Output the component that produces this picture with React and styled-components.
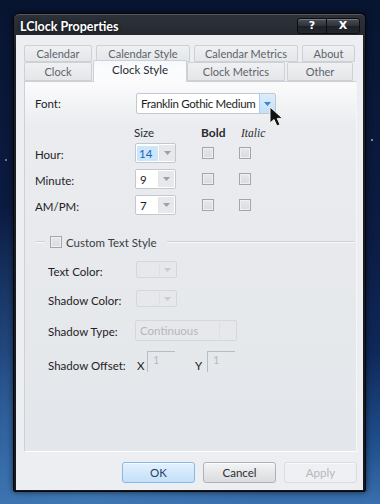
import React from "react";
import styled, { createGlobalStyle } from "styled-components";

const Global = createGlobalStyle`
  html, body { margin: 0; padding: 0; }
  body { font-family: Lato, "Noto Sans", sans-serif; }
  * { box-sizing: border-box; }
`;

const Desktop = styled.div`
  width: 380px;
  height: 504px;
  overflow: hidden;
  padding: 13px 14px 0 13px;
  background:
    radial-gradient(circle at 30px 20px, rgba(255,255,255,0.6) 0 1px, transparent 1.5px),
    radial-gradient(circle at 372px 140px, rgba(255,255,255,0.5) 0 1px, transparent 1.5px),
    radial-gradient(circle at 6px 160px, rgba(255,255,255,0.4) 0 1px, transparent 1.5px),
    radial-gradient(ellipse at 20% 100%, #3f77b3 0%, rgba(63,119,179,0) 45%),
    linear-gradient(180deg, #081531 0%, #0b1b42 45%, #0f285a 70%, #1f4f8c 88%, #3a70ad 100%);
`;

const Window = styled.div`
  width: 353px;
  height: 479px;
  display: flex;
  flex-direction: column;
  border-radius: 6px 6px 2px 2px;
  border: 1px solid #05070b;
  background: linear-gradient(180deg, #2e333b 0%, #1d2128 8%, #15181e 100%);
  box-shadow: inset 0 1px 0 rgba(255,255,255,0.18), 0 0 6px rgba(0,0,0,0.6);
  padding: 0 2px 2px 2px;
`;

const TitleBar = styled.div`
  height: 21px;
  flex: none;
  display: flex;
  align-items: center;
  justify-content: space-between;
  padding: 0 3px 0 4px;
`;

const Title = styled.div`
  color: #ffffff;
  font-weight: 700;
  font-size: 12.5px;
  text-shadow: 0 0 4px rgba(0,0,0,0.8);
  padding-top: 3px;
`;

const CaptionGroup = styled.div`
  display: flex;
  height: 16px;
  margin-top: 2px;
  border: 1px solid #0b0d10;
  border-radius: 3px;
  background: linear-gradient(180deg, #4a4f57 0%, #2d3138 50%, #1d2026 51%, #24282e 100%);
  box-shadow: inset 0 1px 0 rgba(255,255,255,0.25);
  overflow: hidden;
`;

const CaptionBtn = styled.div`
  width: ${p => p.$w}px;
  display: flex;
  align-items: center;
  justify-content: center;
  color: #ffffff;
  font-family: "DejaVu Sans", sans-serif;
  font-weight: 700;
  font-size: 11px;
  line-height: 1;
  border-left: ${p => (p.$first ? "none" : "1px solid #0c0e12")};
`;

const Client = styled.div`
  flex: 1;
  display: flex;
  flex-direction: column;
  background: #eceef2;
  padding: 10px 6px 7px 8px;
`;

const Tabs = styled.div`
  display: flex;
  flex-direction: column;
  position: relative;
  z-index: 1;
`;

const TabRow = styled.div`
  display: flex;
  height: ${p => p.$h}px;
  align-items: flex-end;
`;

const Tab = styled.div`
  width: ${p => p.$w}px;
  margin-left: ${p => p.$ml || 0}px;
  height: ${p => (p.$sel ? 22 : p.$h)}px;
  margin-bottom: ${p => (p.$sel ? -1 : 0)}px;
  display: flex;
  align-items: center;
  justify-content: center;
  white-space: nowrap;
  font-size: ${p => (p.$sel ? 11.5 : 11)}px;
  color: ${p => (p.$sel ? "#262a30" : "#5e636a")};
  border: 1px solid #cdd1d6;
  border-bottom: ${p => (p.$sel ? "none" : "1px solid #cdd1d6")};
  border-radius: 2px 2px 0 0;
  padding-bottom: ${p => (p.$sel ? 4 : 0)}px;
  background: ${p =>
    p.$sel
      ? "linear-gradient(180deg, #f4f8fc 0%, #fbfcfd 40%, #fbfbfc 100%)"
      : "linear-gradient(180deg, #eef0f2 0%, #e4e6e9 100%)"};
`;

const Panel = styled.div`
  height: 371px;
  flex: none;
  position: relative;
  background: linear-gradient(180deg, #fbfbfc 0%, #eaecef 12%, #e3e6ea 100%);
  border: 1px solid #cdd1d6;
  border-bottom-color: #ffffff;
  border-right-color: #f4f5f7;
  padding: 11px 0 0 10px;
  display: flex;
  flex-direction: column;
  color: #1f2226;
  font-size: 11.5px;
  white-space: nowrap;
`;

const FontRow = styled.div`
  display: flex;
  align-items: center;
  height: 21px;
`;

const Label = styled.div`
  width: ${p => p.$w}px;
  flex: none;
  padding-top: ${p => p.$pt || 0}px;
  color: ${p => p.$c || "#1f2226"};
`;

const Combo = styled.div`
  width: ${p => p.$w}px;
  height: ${p => p.$h}px;
  display: flex;
  align-items: stretch;
  background: ${p => (p.$disabled ? "#e6e8eb" : "#ffffff")};
  border: 1px solid ${p => (p.$disabled ? "#d4d7db" : "#c3c8cf")};
  border-radius: 2px;
  position: relative;
`;

const ComboText = styled.div`
  flex: 1;
  display: flex;
  align-items: center;
  padding-left: ${p => (p.$pl != null ? p.$pl : 4)}px;
  font-size: 11.5px;
  letter-spacing: ${p => p.$ls || 0}px;
  color: ${p => (p.$disabled ? "#b3b7bd" : "#1a1d21")};
`;

const Selected = styled.span`
  display: flex;
  align-items: center;
  width: 21px;
  height: 15px;
  margin-left: 1px;
  padding-left: 2px;
  background: #cce6fb;
  color: #1d64b4;
`;

const DropBtn = styled.div`
  width: 16px;
  flex: none;
  display: flex;
  align-items: center;
  justify-content: center;
  background: ${p =>
    p.$hot
      ? "linear-gradient(180deg, #dcedfc 0%, #c3e0f9 100%)"
      : p.$disabled
      ? "transparent"
      : "#e6e8eb"};
  border-left: 1px solid ${p => (p.$hot ? "#a9cdf0" : p.$disabled ? "#dcdfe3" : "#e2e4e7")};
  margin: ${p => (p.$hot ? "0" : "1px")};
`;

const Arrow = ({ color }) => (
  <svg width="7" height="4" viewBox="0 0 7 4">
    <path d="M0 0 H7 L3.5 4 Z" fill={color} />
  </svg>
);

const Grid = styled.div`
  display: grid;
  grid-template-columns: 100px 66px 38px 38px;
  grid-template-rows: 12px 20px 20px 20px;
  row-gap: 6px;
  align-items: center;
  margin-top: 11px;
`;

const HeaderCell = styled.div`
  align-self: end;
  line-height: 14px;
  font-size: ${p => (p.$bold ? 12 : 11.5)}px;
  font-weight: ${p => (p.$bold ? 700 : 400)};
  font-style: ${p => (p.$italic ? "italic" : "normal")};
  font-family: ${p => (p.$italic ? '"Liberation Serif", serif' : "inherit")};
  color: #2a2d31;
  margin-left: ${p => p.$ml || 0}px;
  margin-bottom: -3px;
`;

const Check = styled.div`
  width: 12px;
  height: 12px;
  margin-left: ${p => p.$ml || 0}px;
  border: 1px solid #a1a6ad;
  background: linear-gradient(180deg, #e6e8eb 0%, #d8dbdf 100%);
  box-shadow: inset 0 0 0 1px #eef0f2;
`;

const GroupHead = styled.div`
  display: flex;
  align-items: center;
  margin-top: 21px;
  height: 12px;
  margin-right: 2px;
`;

const Line = styled.div`
  height: 2px;
  border-top: 1px solid #cdd1d6;
  border-bottom: 1px solid #f7f8f9;
  width: ${p => (p.$w ? `${p.$w}px` : "auto")};
  flex: ${p => (p.$w ? "none" : 1)};
  margin-left: ${p => p.$ml || 0}px;
`;

const GroupTitle = styled.div`
  margin-left: 4px;
  color: #3a3e44;
  font-size: 11.5px;
`;

const GroupBody = styled.div`
  display: flex;
  flex-direction: column;
  padding-left: 13px;
  margin-top: 13px;
`;

const GRow = styled.div`
  display: flex;
  align-items: center;
  height: ${p => p.$h}px;
  margin-top: ${p => p.$mt || 0}px;
`;

const Sunken = styled.div`
  width: 28px;
  height: 21px;
  border-top: 1px solid #b9bdc3;
  border-left: 1px solid #b9bdc3;
  color: #b6bac0;
  font-size: 11px;
  padding: 1px 0 0 5px;
  flex: none;
`;

const AxisLabel = styled.div`
  width: ${p => p.$w}px;
  flex: none;
  padding-top: 9px;
  padding-left: ${p => p.$pl || 0}px;
`;

const Cursor = styled.svg`
  position: absolute;
  left: 244px;
  top: 24px;
`;

const Buttons = styled.div`
  display: flex;
  justify-content: flex-end;
  gap: 8px;
  margin-top: 10px;
`;

const Btn = styled.div`
  width: 73px;
  height: 21px;
  display: flex;
  align-items: center;
  justify-content: center;
  font-size: 11.5px;
  border-radius: 3px;
  color: ${p => (p.$variant === "ok" ? "#1f3f66" : p.$variant === "off" ? "#b4b8be" : "#2b2e33")};
  border: 1px solid
    ${p => (p.$variant === "ok" ? "#86b9ea" : p.$variant === "off" ? "#d9dce0" : "#aeb2b8")};
  background: ${p =>
    p.$variant === "ok"
      ? "linear-gradient(180deg, #e4f1fd 0%, #d3e8fb 50%, #c5e0f8 100%)"
      : p.$variant === "off"
      ? "#eef0f3"
      : "linear-gradient(180deg, #f3f4f5 0%, #e6e7e9 50%, #dadcdf 100%)"};
  box-shadow: inset 0 1px 0 rgba(255,255,255,0.7);
`;

const topTabs = [
  { t: "Calendar", w: 68, ml: 0 },
  { t: "Calendar Style", w: 94, ml: 4 },
  { t: "Calendar Metrics", w: 104, ml: 4 },
  { t: "About", w: 53, ml: 4 },
];
const bottomTabs = [
  { t: "Clock", w: 68, ml: 0 },
  { t: "Clock Style", w: 94, ml: 1, sel: true },
  { t: "Clock Metrics", w: 98, ml: 0 },
  { t: "Other", w: 66, ml: 2 },
];

const sizes = [
  { label: "Hour:", v: "14", sel: true },
  { label: "Minute:", v: "9" },
  { label: "AM/PM:", v: "7" },
];

export default function App() {
  return (
    <>
      <Global />
      <Desktop>
        <Window>
          <TitleBar>
            <Title>LClock Properties</Title>
            <CaptionGroup>
              <CaptionBtn $w={28} $first>?</CaptionBtn>
              <CaptionBtn $w={33}>X</CaptionBtn>
            </CaptionGroup>
          </TitleBar>
          <Client>
            <Tabs>
              <TabRow $h={17}>
                {topTabs.map(t => (
                  <Tab key={t.t} $w={t.w} $ml={t.ml} $h={17}>
                    {t.t}
                  </Tab>
                ))}
              </TabRow>
              <TabRow $h={19}>
                {bottomTabs.map(t => (
                  <Tab key={t.t} $w={t.w} $ml={t.ml} $h={19} $sel={t.sel}>
                    {t.t}
                  </Tab>
                ))}
              </TabRow>
            </Tabs>
            <Panel>
              <FontRow>
                <Label $w={101}>Font:</Label>
                <Combo $w={140} $h={21}>
                  <ComboText $ls={-0.3}>Franklin Gothic Medium</ComboText>
                  <DropBtn $hot>
                    <Arrow color="#3a86d4" />
                  </DropBtn>
                </Combo>
              </FontRow>
              <Grid>
                <div />
                <HeaderCell $ml={-1}>Size</HeaderCell>
                <HeaderCell $bold>Bold</HeaderCell>
                <HeaderCell $italic $ml={2}>Italic</HeaderCell>
                {sizes.map(s => (
                  <React.Fragment key={s.label}>
                    <Label $pt={3}>{s.label}</Label>
                    <Combo $w={41} $h={20}>
                      <ComboText $pl={s.sel ? 0 : 4}>
                        {s.sel ? <Selected>{s.v}</Selected> : s.v}
                      </ComboText>
                      <DropBtn>
                        <Arrow color="#9ba0a6" />
                      </DropBtn>
                    </Combo>
                    <Check $ml={1} />
                    <Check />
                  </React.Fragment>
                ))}
              </Grid>
              <GroupHead>
                <Line $w={9} $ml={1} />
                <Check $ml={5} />
                <GroupTitle>Custom Text Style</GroupTitle>
                <Line $ml={10} />
              </GroupHead>
              <GroupBody>
                <GRow $h={17}>
                  <Label $w={88} $pt={4}>Text Color:</Label>
                  <Combo $w={41} $h={17} $disabled>
                    <ComboText $disabled />
                    <DropBtn $disabled>
                      <Arrow color="#c8ccd1" />
                    </DropBtn>
                  </Combo>
                </GRow>
                <GRow $h={17} $mt={12}>
                  <Label $w={88} $pt={4}>Shadow Color:</Label>
                  <Combo $w={41} $h={17} $disabled>
                    <ComboText $disabled />
                    <DropBtn $disabled>
                      <Arrow color="#c8ccd1" />
                    </DropBtn>
                  </Combo>
                </GRow>
                <GRow $h={21} $mt={13}>
                  <Label $w={87} $pt={2}>Shadow Type:</Label>
                  <Combo $w={102} $h={21} $disabled>
                    <ComboText $disabled>Continuous</ComboText>
                    <DropBtn $disabled />
                  </Combo>
                </GRow>
                <GRow $h={22} $mt={9}>
                  <Label $w={89} $pt={9}>Shadow Offset:</Label>
                  <AxisLabel $w={10}>X</AxisLabel>
                  <Sunken>1</Sunken>
                  <AxisLabel $w={32} $pl={20}>Y</AxisLabel>
                  <Sunken>1</Sunken>
                </GRow>
              </GroupBody>
              <Cursor width="16" height="22" viewBox="0 0 16 22">
                <path
                  d="M1 1 L1 17 L5 13.5 L8 20 L11 18.6 L8.2 12.4 L13.5 12.4 Z"
                  fill="#111"
                  stroke="#f2f2f2"
                  strokeWidth="1"
                  strokeLinejoin="round"
                />
              </Cursor>
            </Panel>
            <Buttons>
              <Btn $variant="ok">OK</Btn>
              <Btn>Cancel</Btn>
              <Btn $variant="off">Apply</Btn>
            </Buttons>
          </Client>
        </Window>
      </Desktop>
    </>
  );
}
